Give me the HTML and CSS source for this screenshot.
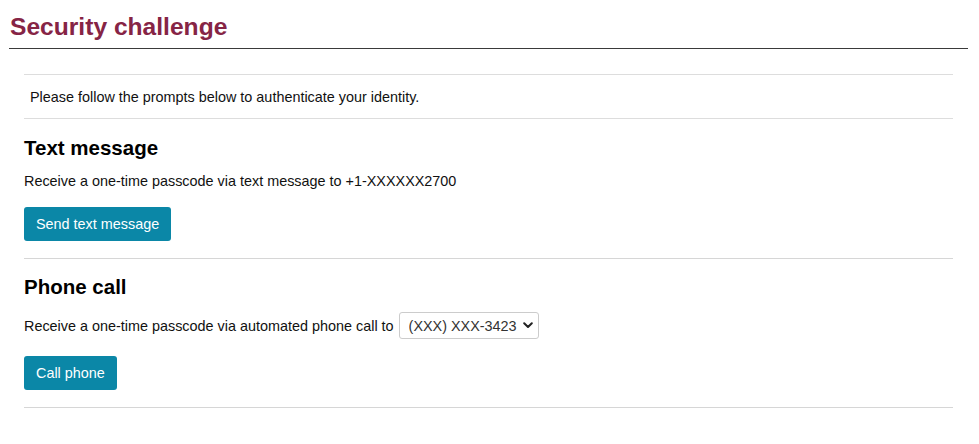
FILE: index.html
```html
<!DOCTYPE html>
<html lang="en">
<head>
<meta charset="utf-8">
<title>Security challenge</title>
<link rel="stylesheet" href="styles.css">
</head>
<body>
<div class="page">
  <h1 class="page-title">Security challenge</h1>
  <div class="content">
    <p class="intro">Please follow the prompts below to authenticate your identity.</p>
    <section class="method">
      <h2 class="method-title">Text message</h2>
      <p class="method-text">Receive a one-time passcode via text message to +1-XXXXXX2700</p>
      <button class="btn" type="button">Send text message</button>
    </section>
    <section class="method">
      <h2 class="method-title">Phone call</h2>
      <div class="method-row">
        <span class="method-text-inline">Receive a one-time passcode via automated phone call to</span>
        <span class="select-wrap">
          <select class="phone-select">
            <option>(XXX) XXX-3423</option>
          </select>
          <svg class="chevron" width="10" height="7" viewBox="0 0 10 7" aria-hidden="true"><path d="M1.2 1.2 L5 5 L8.8 1.2" fill="none" stroke="#222" stroke-width="2" stroke-linecap="round" stroke-linejoin="round"/></svg>
        </span>
      </div>
      <button class="btn btn-call" type="button">Call phone</button>
    </section>
  </div>
</div>
</body>
</html>
```
FILE: styles.css
```css
html, body {
  margin: 0;
  padding: 0;
  background: #ffffff;
}
body {
  font-family: "Liberation Sans", Arial, sans-serif;
  font-size: 14.4px;
  color: #111;
}
.page {
  margin: 0 11px 0 9px;
}
.page-title {
  margin: 13px 0 0 0;
  padding: 0 0 7px 1px;
  font-size: 24.6px;
  line-height: 28px;
  font-weight: bold;
  color: #862445;
  border-bottom: 1px solid #3a3a3a;
}
.content {
  margin: 0 15px;
}
.intro {
  margin: 25px 0 0 0;
  padding: 12px 6px 11px 6px;
  line-height: 20px;
  border-top: 1px solid #dddddd;
  border-bottom: 1px solid #dddddd;
  color: #111;
}
.method {
  padding-bottom: 17px;
  border-bottom: 1px solid #d6d6d6;
}
.method-title {
  margin: 17px 0 0 0;
  font-size: 20.5px;
  line-height: 24px;
  font-weight: bold;
  color: #000;
}
.method + .method .method-title {
  margin-top: 16px;
}
.method-text {
  margin: 11px 0 0 0;
  line-height: 20px;
}
.method-row {
  margin-top: 11px;
  min-height: 31px;
  display: flex;
  align-items: center;
  gap: 5px;
}
.select-wrap {
  position: relative;
  display: inline-flex;
}
.phone-select {
  -webkit-appearance: none;
  appearance: none;
  width: 140px;
  height: 27px;
  margin: 0;
  padding: 0 20px 0 9px;
  border: 1px solid #cccccc;
  border-radius: 3px;
  background: #ffffff;
  font-family: "Liberation Sans", Arial, sans-serif;
  font-size: 14.4px;
  color: #333;
}
.chevron {
  position: absolute;
  right: 6px;
  top: 10px;
  pointer-events: none;
}
.btn {
  display: block;
  margin-top: 16px;
  padding: 7px 12px;
  border: none;
  border-radius: 3px;
  background: #0b87a7;
  color: #ffffff;
  font-family: "Liberation Sans", Arial, sans-serif;
  font-size: 14.4px;
  line-height: 20px;
}
.btn-call {
  margin-top: 15px;
}
```
